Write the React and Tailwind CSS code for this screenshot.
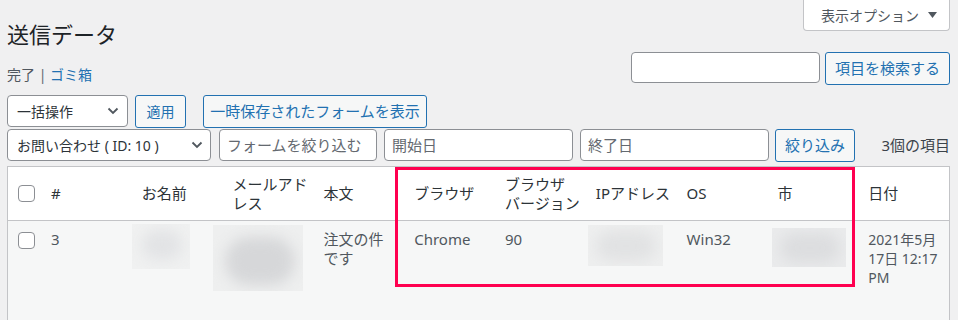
import React from "react";

const font = { fontFamily: '"Noto Sans", "Noto Sans CJK JP", sans-serif' };

function Chevron() {
  return (
    <svg width="12" height="8" viewBox="0 0 12 8" className="shrink-0">
      <path d="M1.5 1.5 L6 6 L10.5 1.5" fill="none" stroke="#50575e" strokeWidth="1.8" />
    </svg>
  );
}

function Checkbox() {
  return <div className="w-[17px] h-[17px] rounded-[4px] border border-[#8c8f94] bg-white" />;
}

function Blur({ className, inner }) {
  return (
    <div className={"relative overflow-hidden " + className}>
      <div className={"absolute blur-[7px] rounded-full " + inner} />
    </div>
  );
}

export default function App() {
  return (
    <div
      className="bg-[#f0f0f1] min-h-[320px] h-[320px] overflow-hidden pl-[7px] pr-[8px] text-[#2c3338]"
      style={font}
    >
      <button className="float-right h-[31px] w-[147px] bg-white border border-t-0 border-[#c3c4c7] rounded-b-[4px] flex items-center pl-[17px] gap-[9px] text-[14px] text-[#50575e]">
        <span>表示オプション</span>
        <svg width="9" height="6" viewBox="0 0 9 6">
          <polygon points="0,0 9,0 4.5,6" fill="#50575e" />
        </svg>
      </button>
      <h1 className="pt-[20px] text-[22px] leading-[28px] font-normal text-[#1d2327]">送信データ</h1>

      <div className="mt-[4px] flex items-end justify-between">
        <div className="text-[14px] leading-[20px] text-[#50575e]">
          完了 <span className="text-[#646970]">|</span> <span className="text-[#2271b1]">ゴミ箱</span>
        </div>
        <div className="flex items-start gap-[5px]">
          <div className="w-[189px] h-[31px] bg-white border border-[#8c8f94] rounded-[4px]" />
          <button className="w-[125px] h-[33px] border border-[#2271b1] rounded-[3px] bg-[#f6f7f7] text-[#2271b1] text-[15px]">
            項目を検索する
          </button>
        </div>
      </div>

      <div className="mt-[10px] flex items-start">
        <div className="w-[121px] h-[32px] bg-white border border-[#8c8f94] rounded-[4px] flex items-center justify-between pl-[9px] pr-[8px] text-[14px]">
          <span>一括操作</span>
          <Chevron />
        </div>
        <button className="ml-[7px] w-[51px] h-[33px] border border-[#2271b1] rounded-[3px] bg-[#f6f7f7] text-[#2271b1] text-[14px]">
          適用
        </button>
        <button className="ml-[17px] w-[224px] h-[33px] border border-[#2271b1] rounded-[3px] bg-[#f6f7f7] text-[#2271b1] text-[15px]">
          一時保存されたフォームを表示
        </button>
      </div>

      <div className="mt-[1px] flex items-start">
        <div className="w-[204px] h-[32px] bg-white border border-[#8c8f94] rounded-[4px] flex items-center justify-between pl-[9px] pr-[7px] text-[14px]">
          <span>お問い合わせ ( ID: 10 )</span>
          <Chevron />
        </div>
        <div className="ml-[8px] w-[158px] h-[32px] bg-white border border-[#8c8f94] rounded-[4px] flex items-center pl-[7px] text-[15px] text-[#646970]">
          フォームを絞り込む
        </div>
        <div className="ml-[7px] w-[189px] h-[32px] bg-white border border-[#8c8f94] rounded-[4px] flex items-center pl-[7px] text-[15px] text-[#646970]">
          開始日
        </div>
        <div className="ml-[7px] w-[189px] h-[32px] bg-white border border-[#8c8f94] rounded-[4px] flex items-center pl-[7px] text-[15px] text-[#646970]">
          終了日
        </div>
        <button className="ml-[6px] w-[80px] h-[33px] border border-[#2271b1] rounded-[3px] bg-[#f6f7f7] text-[#2271b1] text-[15px]">
          絞り込み
        </button>
        <div className="flex-1 h-[32px] flex items-center justify-end text-[15px] text-[#3c434a]">3個の項目</div>
      </div>

      <div className="mt-[4px] relative border border-[#c3c4c7] bg-white">
        <div className="grid grid-cols-[33px_repeat(10,minmax(0,1fr))] h-[54px] items-center border-b border-[#c3c4c7] text-[15px] leading-[19px] text-[#2c3338] whitespace-nowrap">
          <div className="pl-[10px]"><Checkbox /></div>
          <div className="px-[10px]">#</div>
          <div className="px-[10px]">お名前</div>
          <div className="px-[10px]">メールアド<br />レス</div>
          <div className="px-[10px]">本文</div>
          <div className="px-[10px]">ブラウザ</div>
          <div className="px-[10px]">ブラウザ<br />バージョン</div>
          <div className="px-[10px]">IPアドレス</div>
          <div className="px-[10px]">OS</div>
          <div className="px-[10px]">市</div>
          <div className="px-[10px]">日付</div>
        </div>
        <div className="grid grid-cols-[33px_repeat(10,minmax(0,1fr))] h-[120px] items-start bg-[#f6f7f7] text-[15px] leading-[19px] text-[#50575e] whitespace-nowrap">
          <div className="pl-[10px] pt-[11px]"><Checkbox /></div>
          <div className="px-[10px] pt-[9px]">3</div>
          <div className="pt-[3px]">
            <Blur className="w-[58px] h-[45px] bg-[#f0f1f1]" inner="left-[10px] top-[6px] w-[40px] h-[30px] bg-[#e2e3e5]" />
          </div>
          <div className="pt-[4px] -ml-[10px]">
            <Blur className="w-[90px] h-[66px] bg-[#eeefef]" inner="left-[12px] top-[12px] w-[70px] h-[48px] bg-[#d6d7d9]" />
          </div>
          <div className="px-[10px] pt-[9px]">注文の件<br />です</div>
          <div className="px-[10px] pt-[9px]">Chrome</div>
          <div className="px-[10px] pt-[9px]">90</div>
          <div className="pt-[4px] pl-[2px]">
            <Blur className="w-[75px] h-[41px] bg-[#eeefef]" inner="left-[8px] top-[6px] w-[60px] h-[30px] bg-[#e1e2e3]" />
          </div>
          <div className="px-[10px] pt-[9px]">Win32</div>
          <div className="pt-[7px] pl-[5px]">
            <Blur className="w-[74px] h-[39px] bg-[#eaebec]" inner="left-[8px] top-[5px] w-[60px] h-[30px] bg-[#dcdddf]" />
          </div>
          <div className="px-[10px] pt-[9px] text-[14px]">2021年5月<br />17日 12:17<br />PM</div>
        </div>
        <div className="absolute left-[387px] top-0 w-[460px] h-[120px] border-[3px] border-[#ff0050]" />
      </div>
    </div>
  );
}
